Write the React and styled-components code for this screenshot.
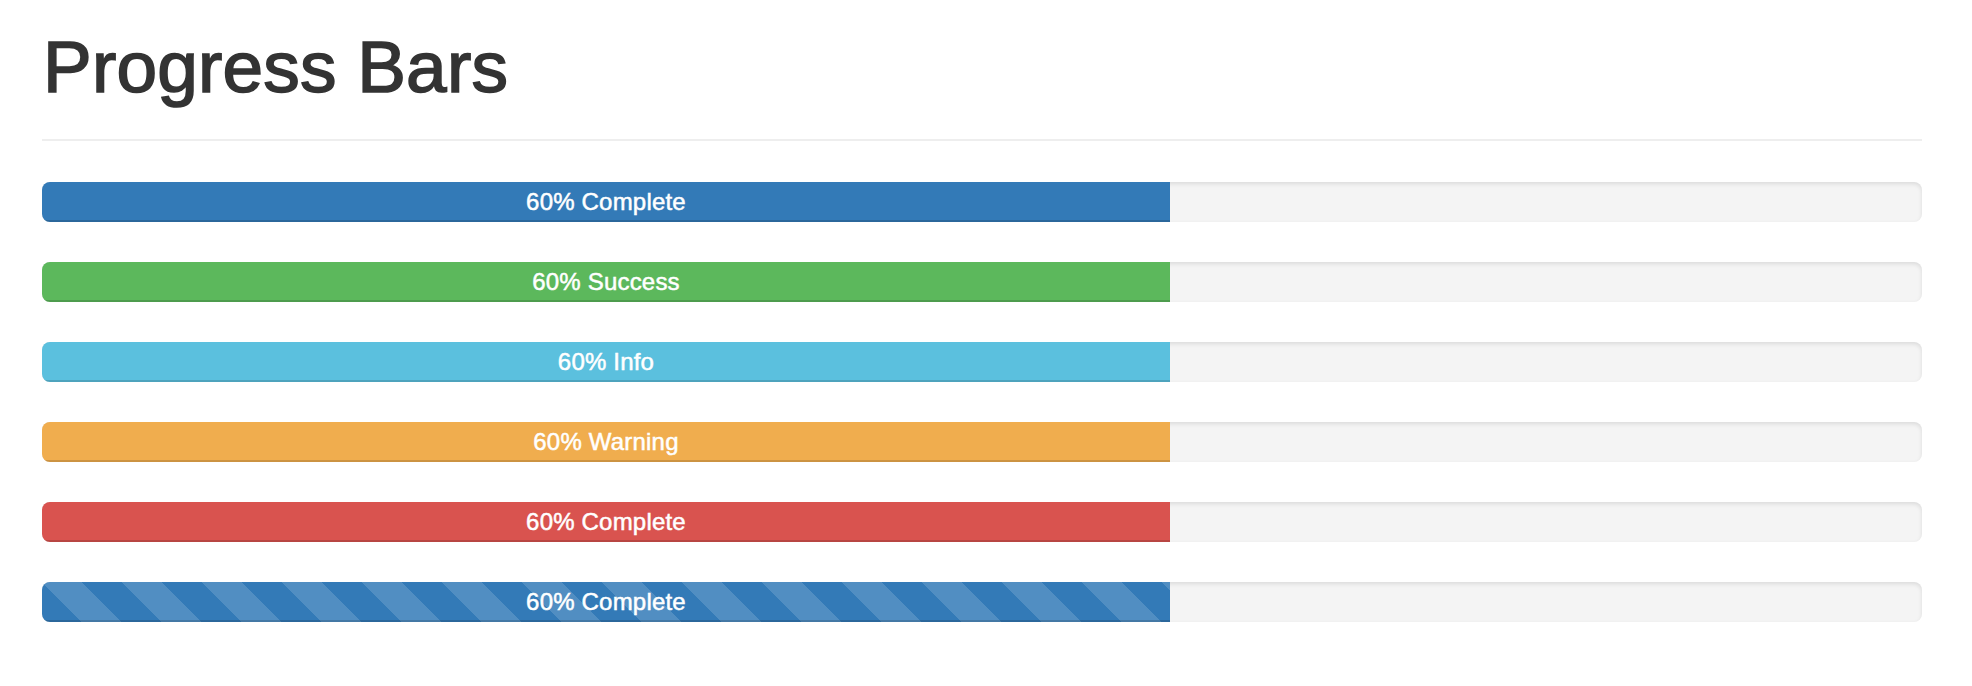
import styled, { createGlobalStyle, css } from 'styled-components'

const GlobalStyle = createGlobalStyle`
  html, body {
    margin: 0;
    padding: 0;
    background: #fff;
  }
  body {
    font-family: "Liberation Sans", Arial, Helvetica, sans-serif;
    color: #333;
  }
`

const colors = {
  primary: '#337ab7',
  success: '#5cb85c',
  info: '#5bc0de',
  warning: '#f0ad4e',
  danger: '#d9534f',
}

const bars = [
  { variant: 'primary', label: '60% Complete' },
  { variant: 'success', label: '60% Success' },
  { variant: 'info', label: '60% Info' },
  { variant: 'warning', label: '60% Warning' },
  { variant: 'danger', label: '60% Complete' },
  { variant: 'primary', label: '60% Complete', striped: true },
]

const App = () => {
  return (
    <Page>
      <GlobalStyle />
      <Header>
        <Title>Progress Bars</Title>
      </Header>
      <BarList>
        {bars.map((bar, i) => (
          <Track key={i}>
            <Fill $variant={bar.variant} $striped={bar.striped} $value={60}>
              {bar.label}
            </Fill>
          </Track>
        ))}
      </BarList>
    </Page>
  )
}
export default App

const Page = styled.div`
  padding: 27px 50px 40px 42px;
`
const Header = styled.div`
  padding-bottom: 32px;
  border-bottom: 2px solid #eee;
  margin-bottom: 41px;
`
const Title = styled.h1`
  margin: 0;
  padding-left: 1px;
  font-family: "Liberation Sans", Arial, sans-serif;
  font-size: 73px;
  font-weight: 500;
  line-height: 1.1;
  color: #333;
  letter-spacing: 0.2px;
  -webkit-text-stroke: 1.6px #333;
`
const BarList = styled.div`
  display: flex;
  flex-direction: column;
  gap: 40px;
`
const Track = styled.div`
  height: 40px;
  overflow: hidden;
  background-color: #f4f4f4;
  border-radius: 8px;
  box-shadow: inset 0 2px 4px rgba(0, 0, 0, 0.1);
  display: flex;
`
const Fill = styled.div`
  width: ${(p) => p.$value}%;
  height: 100%;
  background-color: ${(p) => colors[p.$variant]};
  color: #fff;
  font-size: 24px;
  line-height: 40px;
  letter-spacing: 0.2px;
  text-align: center;
  -webkit-text-stroke: 0.5px #fff;
  box-shadow: inset 0 -2px 0 rgba(0, 0, 0, 0.15);
  ${(p) =>
    p.$striped &&
    css`
      background-image: linear-gradient(
        45deg,
        rgba(255, 255, 255, 0.15) 25%,
        transparent 25%,
        transparent 50%,
        rgba(255, 255, 255, 0.15) 50%,
        rgba(255, 255, 255, 0.15) 75%,
        transparent 75%,
        transparent
      );
      background-size: 80px 80px;
    `}
`
